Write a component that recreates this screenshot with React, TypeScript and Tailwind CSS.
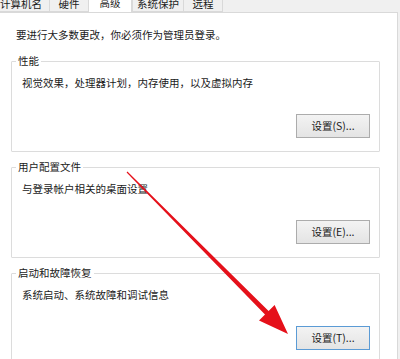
const font = { fontFamily: '"Microsoft YaHei", "Noto Sans CJK SC", sans-serif' }

const tabs = [
  { label: '计算机名', w: 'w-[58px] -ml-[8px]' },
  { label: '硬件', w: 'w-[40px]' },
  { label: '高级', w: 'w-[44px]', active: true },
  { label: '系统保护', w: 'w-[52px]' },
  { label: '远程', w: 'w-[40px]' },
]

const groups = [
  { title: '性能', desc: '视觉效果，处理器计划，内存使用，以及虚拟内存', btn: '设置(S)...' },
  { title: '用户配置文件', desc: '与登录帐户相关的桌面设置', btn: '设置(E)...' },
  { title: '启动和故障恢复', desc: '系统启动、系统故障和调试信息', btn: '设置(T)...', focus: true },
]

export default function App() {
  return (
    <div
      className="relative w-[400px] h-[359px] overflow-hidden bg-[#f0f0f0] text-[10.5px] text-[#1a1a1a]"
      style={font}
    >
      <div className="flex h-[12px] items-end overflow-hidden">
        {tabs.map((t) =>
          t.active ? (
            <div
              key={t.label}
              className={`${t.w} h-[24px] flex items-center justify-center bg-white border-x border-[#d9d9d9] relative z-10 -mb-px pt-[3px]`}
            >
              {t.label}
            </div>
          ) : (
            <div
              key={t.label}
              className={`${t.w} h-[22px] flex items-center justify-center bg-[#f0f0f0] border border-[#d9d9d9] -mr-px pt-[5px]`}
            >
              {t.label}
            </div>
          )
        )}
      </div>
      <div className="w-[398px] h-[400px] bg-white border-r border-t border-[#d9d9d9] pt-[14px]">
        <div className="pl-[16px] h-[16px] leading-[16px]">要进行大多数更改，你必须作为管理员登录。</div>
        <div className="flex flex-col gap-[7px] mt-[10px] ml-[11px] w-[369px]">
          {groups.map((g) => (
            <fieldset key={g.title} className="h-[99px] border border-[#dcdcdc] rounded-[1px]">
              <legend className="ml-[4px] px-[2px] leading-[16px]">{g.title}</legend>
              <div className="pl-[10px] mt-[6px] leading-[16px]">{g.desc}</div>
              <div className="flex justify-end pr-[9px] mt-[23px]">
                <button
                  className={`w-[74px] h-[24px] leading-none bg-gradient-to-b from-[#f3f3f3] to-[#e4e4e4] border ${
                    g.focus ? 'border-[#5b9bd5]' : 'border-[#acacac]'
                  }`}
                >
                  {g.btn}
                </button>
              </div>
            </fieldset>
          ))}
        </div>
      </div>
      <svg className="absolute left-0 top-0 pointer-events-none" width="400" height="359">
        <polygon
          points="127.4,171.6 268.6,310.9 274.6,304.9 288,334 259,320.5 265,314.5 126.6,172.4"
          fill="#e5101a"
        />
      </svg>
    </div>
  )
}
